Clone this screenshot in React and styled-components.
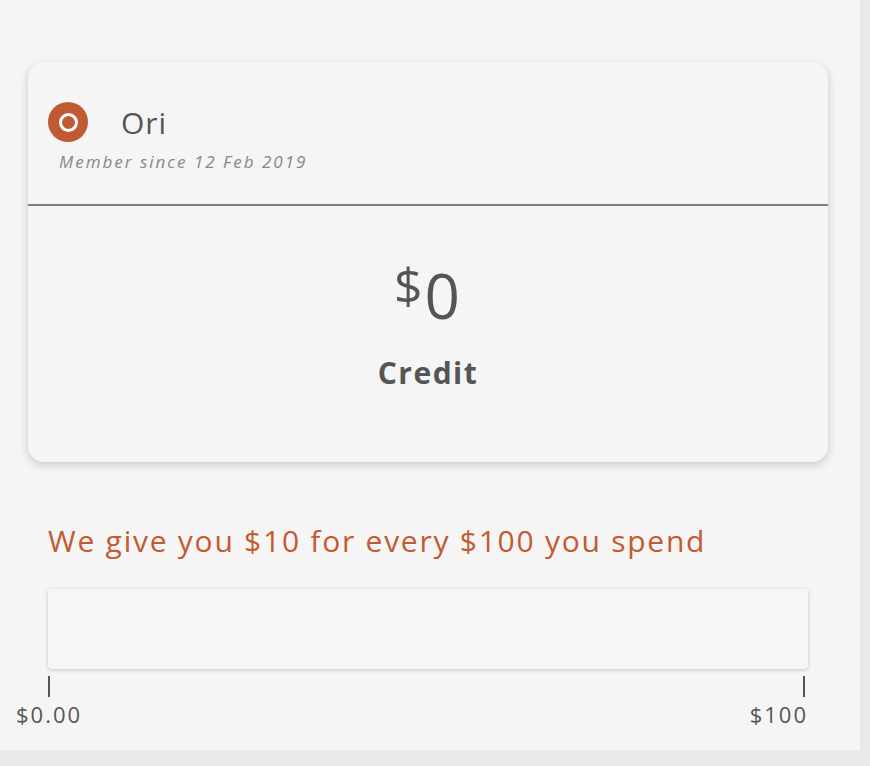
import React from "react";
import styled, { createGlobalStyle } from "styled-components";

const GlobalStyle = createGlobalStyle`
  html, body {
    margin: 0;
    padding: 0;
    background: #e8e8e8;
  }
  body {
    font-family: "Open Sans", "Liberation Sans", sans-serif;
  }
`;

const Page = styled.div`
  width: 870px;
  height: 766px;
  overflow: hidden;
  background: #e9e9e9;
`;

const Panel = styled.div`
  width: 860px;
  height: 750px;
  background: #f5f5f5;
  box-sizing: border-box;
  padding: 62px 32px 0 28px;
`;

const Card = styled.div`
  width: 800px;
  height: 400px;
  background: #f5f5f5;
  border-radius: 16px;
  box-shadow: 0 3px 10px rgba(0, 0, 0, 0.18);
  display: flex;
  flex-direction: column;
  overflow: hidden;
`;

const CardHead = styled.div`
  height: 144px;
  box-sizing: border-box;
  padding: 40px 20px 0 20px;
  border-bottom: 2px solid #808080;
`;

const NameRow = styled.div`
  display: flex;
  align-items: center;
  gap: 33px;
  height: 40px;
`;

const Avatar = styled.div`
  width: 40px;
  height: 40px;
  border-radius: 50%;
  background: #c05a33;
  display: flex;
  align-items: center;
  justify-content: center;

  &::after {
    content: "";
    width: 13px;
    height: 13px;
    border-radius: 50%;
    border: 3px solid #fff;
  }
`;

const Name = styled.div`
  font-size: 30px;
  color: #555;
  letter-spacing: 1px;
`;

const Since = styled.div`
  margin: 8px 0 0 11px;
  font-size: 17px;
  font-style: italic;
  color: #888;
  letter-spacing: 2px;
`;

const CardBody = styled.div`
  flex: 1;
  display: flex;
  flex-direction: column;
  align-items: center;
  padding-top: 58px;
`;

const Amount = styled.div`
  display: flex;
  align-items: flex-start;
  color: #555;
`;

const Currency = styled.span`
  font-size: 50px;
  line-height: 50px;
  margin-top: -4px;
  margin-right: 2px;
`;

const Value = styled.span`
  font-size: 62px;
  line-height: 62px;
  letter-spacing: 2px;
`;

const Label = styled.div`
  margin-top: 26px;
  font-size: 30px;
  font-weight: 700;
  color: #555;
  letter-spacing: 1.5px;
`;

const Promo = styled.div`
  margin: 58px 0 0 20px;
  font-size: 30px;
  color: #c45a30;
  letter-spacing: 1.75px;
`;

const Track = styled.div`
  margin: 28px 0 0 20px;
  width: 760px;
`;

const Bar = styled.div`
  height: 80px;
  background: #f6f6f6;
  border-radius: 4px;
  box-shadow: 0 1px 4px rgba(0, 0, 0, 0.2);
`;

const Ticks = styled.div`
  display: flex;
  justify-content: space-between;
  margin-top: 7px;
  padding-right: 3px;
`;

const Tick = styled.div`
  width: 2px;
  height: 21px;
  background: #555;
`;

const Scale = styled.div`
  display: flex;
  justify-content: space-between;
  margin: 2px 0 0 -32px;
  font-size: 22px;
  color: #555;
  letter-spacing: 2px;
`;

export default function App() {
  return (
    <Page>
      <GlobalStyle />
      <Panel>
        <Card>
          <CardHead>
            <NameRow>
              <Avatar />
              <Name>Ori</Name>
            </NameRow>
            <Since>Member since 12 Feb 2019</Since>
          </CardHead>
          <CardBody>
            <Amount>
              <Currency>$</Currency>
              <Value>0</Value>
            </Amount>
            <Label>Credit</Label>
          </CardBody>
        </Card>
        <Promo>We give you $10 for every $100 you spend</Promo>
        <Track>
          <Bar />
          <Ticks>
            <Tick />
            <Tick />
          </Ticks>
          <Scale>
            <span>$0.00</span>
            <span>$100</span>
          </Scale>
        </Track>
      </Panel>
    </Page>
  );
}
